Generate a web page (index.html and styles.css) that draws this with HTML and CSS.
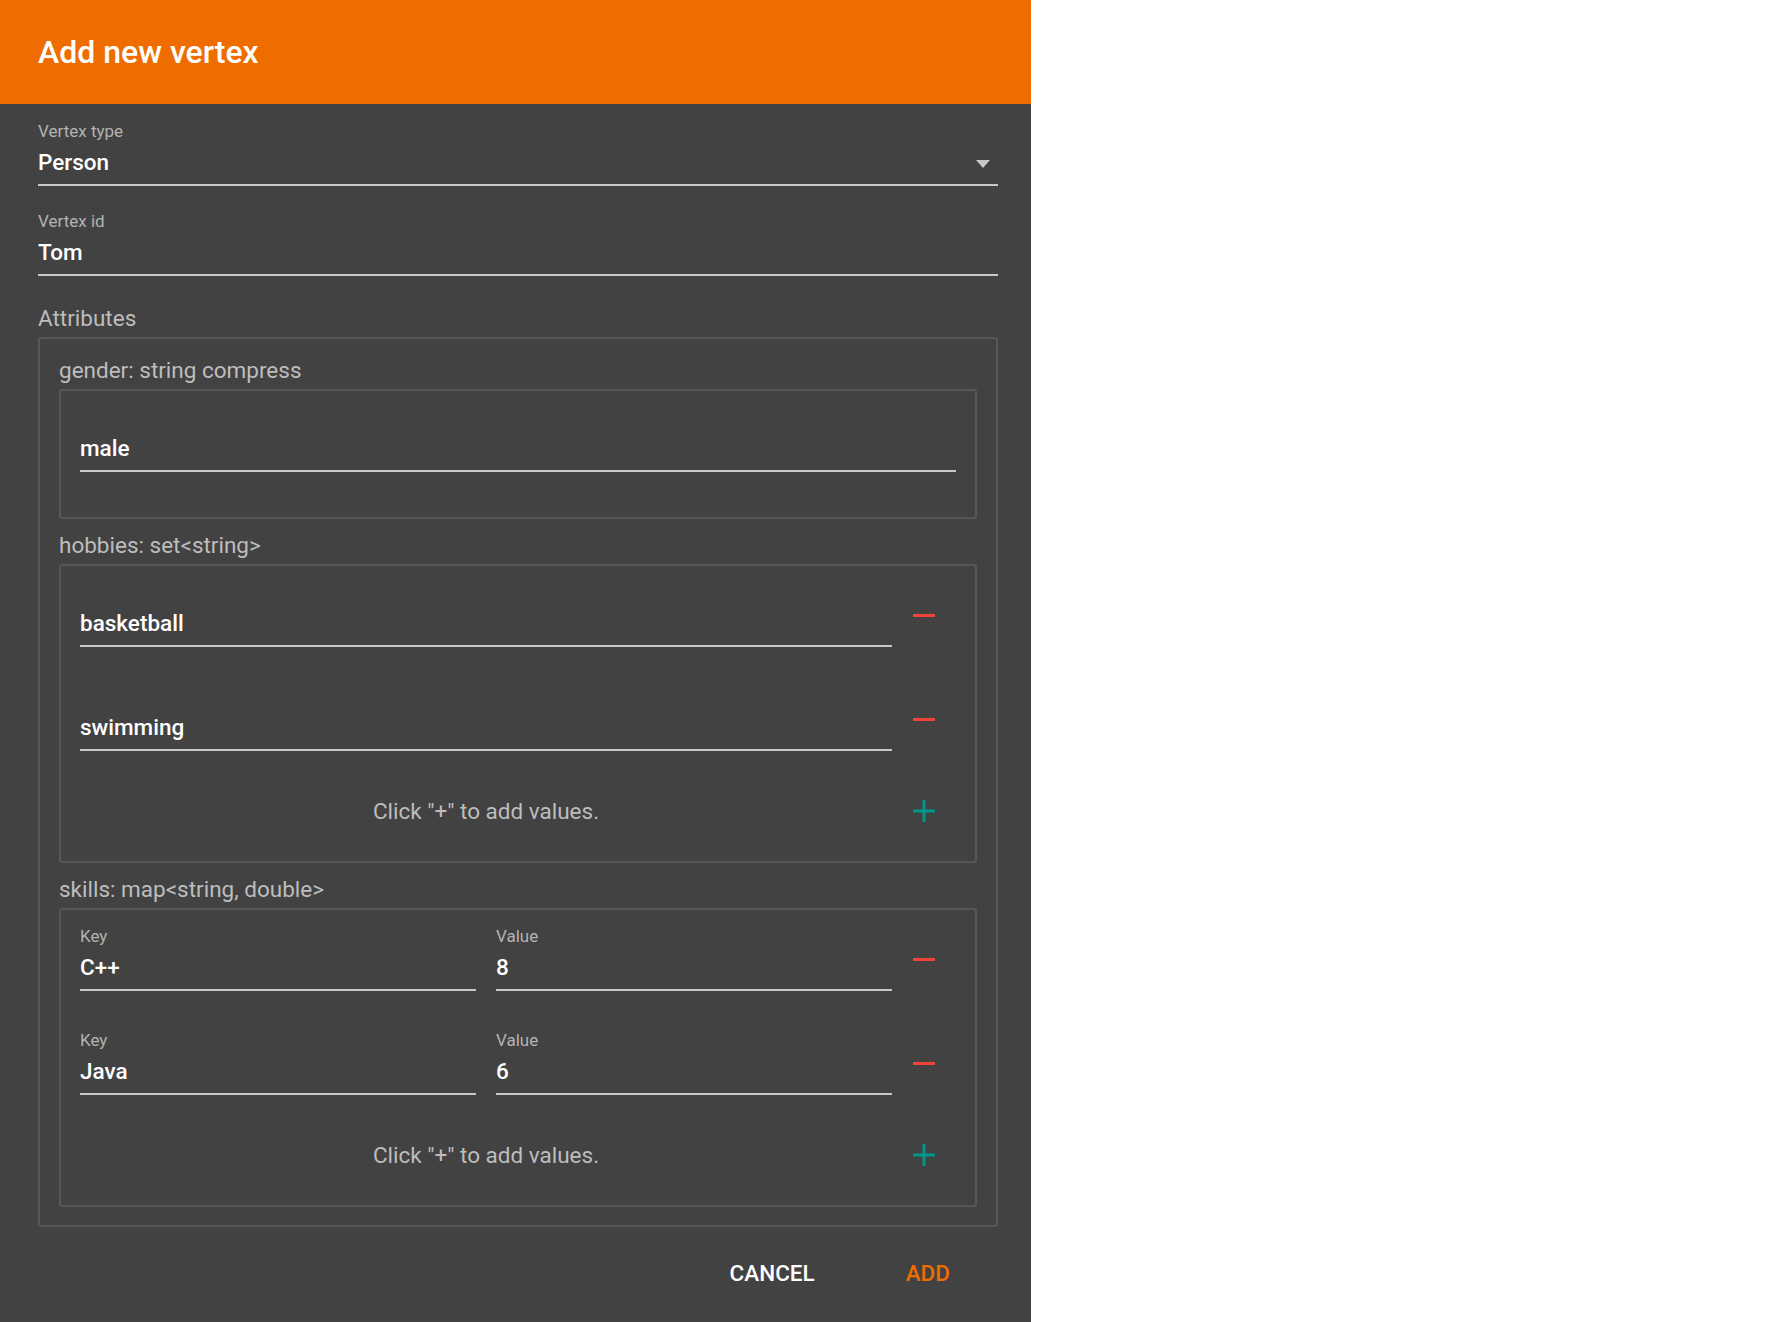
FILE: index.html
```html
<!DOCTYPE html>
<html lang="en">
<head>
  <meta charset="UTF-8" />
  <title>Add new vertex</title>
  <link rel="stylesheet" href="styles.css">
</head>
<body>
  <div class="dialog">
    <!-- Title -->
    <div class="dialog-title">Add new vertex</div>

    <div class="dialog-body">
      <!-- Vertex type -->
      <div class="field">
        <div class="field-label">Vertex type</div>
        <div class="field-value">Person<span class="select-arrow"></span></div>
      </div>

      <!-- Vertex id -->
      <div class="field">
        <div class="field-label">Vertex id</div>
        <div class="field-value">Tom</div>
      </div>

      <div class="section-title">Attributes</div>
      <div class="attr-box">

        <!-- gender -->
        <div class="attr">
          <div class="attr-name">gender: string compress</div>
          <div class="value-box single">
            <div class="field">
              <div class="field-label"></div>
              <div class="field-value">male</div>
            </div>
          </div>
        </div>

        <!-- hobbies -->
        <div class="attr">
          <div class="attr-name">hobbies: set&lt;string&gt;</div>
          <div class="value-box">
            <div class="value-row">
              <div class="fields">
                <div class="field">
                  <div class="field-label"></div>
                  <div class="field-value">basketball</div>
                </div>
              </div>
              <div class="row-action"><div class="remove"></div></div>
            </div>
            <div class="value-row">
              <div class="fields">
                <div class="field">
                  <div class="field-label"></div>
                  <div class="field-value">swimming</div>
                </div>
              </div>
              <div class="row-action"><div class="remove"></div></div>
            </div>
            <div class="add-row">
              <div class="add-hint">Click "+" to add values.</div>
              <div class="row-action">
                <svg class="add-btn" width="22" height="22" viewBox="0 0 22 22"><path d="M11 0v22M0 11h22" stroke="#009688" stroke-width="3" fill="none"/></svg>
              </div>
            </div>
          </div>
        </div>

        <!-- skills -->
        <div class="attr">
          <div class="attr-name">skills: map&lt;string, double&gt;</div>
          <div class="value-box">
            <div class="value-row">
              <div class="fields">
                <div class="field">
                  <div class="field-label">Key</div>
                  <div class="field-value">C++</div>
                </div>
                <div class="field">
                  <div class="field-label">Value</div>
                  <div class="field-value">8</div>
                </div>
              </div>
              <div class="row-action"><div class="remove"></div></div>
            </div>
            <div class="value-row">
              <div class="fields">
                <div class="field">
                  <div class="field-label">Key</div>
                  <div class="field-value">Java</div>
                </div>
                <div class="field">
                  <div class="field-label">Value</div>
                  <div class="field-value">6</div>
                </div>
              </div>
              <div class="row-action"><div class="remove"></div></div>
            </div>
            <div class="add-row">
              <div class="add-hint">Click "+" to add values.</div>
              <div class="row-action">
                <svg class="add-btn" width="22" height="22" viewBox="0 0 22 22"><path d="M11 0v22M0 11h22" stroke="#009688" stroke-width="3" fill="none"/></svg>
              </div>
            </div>
          </div>
        </div>

      </div>
    </div>

    <!-- Actions -->
    <div class="dialog-actions">
      <button class="btn">CANCEL</button>
      <button class="btn btn-primary">ADD</button>
    </div>
  </div>
</body>
</html>
```

FILE: styles.css
```css
*{margin:0;padding:0;box-sizing:border-box;}
html,body{background:#fff;font-family:Roboto,"Liberation Sans",sans-serif;}

.dialog{width:1031px;min-height:100vh;background:#424242;}

.dialog-title{
  height:104px;
  display:flex;
  align-items:center;
  padding-left:38px;
  background:#ef6c00;
  color:#fff;
  font-size:32px;
  font-weight:500;}

.dialog-body{padding:17px 33px 0 38px;}

/* text fields */
.field{display:flex;flex-direction:column;}
.dialog-body > .field + .field{margin-top:25px;}

.field-label{
  height:20px;
  line-height:20px;
  margin-bottom:6px;
  font-size:17px;
  color:#b3b3b3;}

.field-value{
  display:flex;
  align-items:center;
  height:39px;
  line-height:30px;
  padding-bottom:7px;
  border-bottom:2px solid #c8c8c8;
  font-size:22.5px;
  font-weight:500;
  color:#fff;}

.select-arrow{
  width:0;height:0;
  margin:4px 8px 0 auto;
  border-left:7.5px solid transparent;
  border-right:7.5px solid transparent;
  border-top:8px solid #c8c8c8;}

/* attributes */
.section-title{
  margin-top:27px;
  margin-bottom:4px;
  font-size:22.5px;
  line-height:30px;
  color:#bdbdbd;}

.attr-box{
  border:2px solid #575757;
  border-radius:3px;
  padding:16px 19px 18px;}

.attr + .attr{margin-top:11px;}

.attr-name{
  margin-bottom:4px;
  font-size:22.5px;
  line-height:30px;
  color:#bdbdbd;}

.value-box{
  display:flex;
  flex-direction:column;
  gap:39px;
  border:2px solid #575757;
  border-radius:3px;
  padding:16px 19px 29px;}
.value-box.single{padding-bottom:45px;}

.value-row{display:flex;}
.fields{flex:1;display:flex;gap:20px;}
.fields .field{flex:1;}

.row-action{width:64px;padding-left:21px;flex-shrink:0;}

.remove{width:22px;height:3px;margin-top:32px;background:#f44336;}

.add-row{display:flex;align-items:center;height:42px;}
.add-row .row-action{display:flex;align-items:center;}
.add-hint{
  flex:1;
  text-align:center;
  font-size:22.5px;
  color:#bdbdbd;}
.add-btn{display:block;}

/* buttons */
.dialog-actions{
  display:flex;
  justify-content:flex-end;
  gap:43px;
  padding:28px 57px 0 0;}

.btn{
  padding:0 24px;
  background:none;
  border:none;
  font-family:inherit;
  font-size:22.5px;
  font-weight:500;
  line-height:36px;
  color:#fff;
  cursor:pointer;}
.btn-primary{color:#ef6c00;}
```
